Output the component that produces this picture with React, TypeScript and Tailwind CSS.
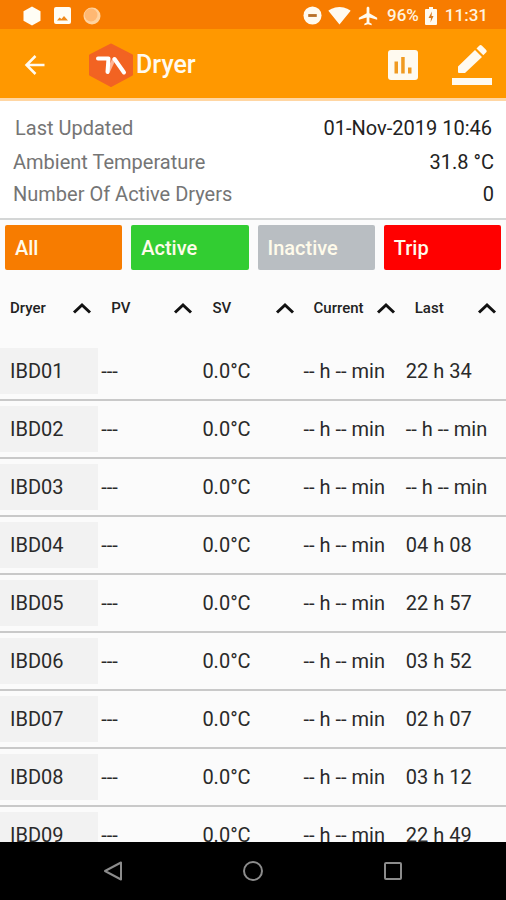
import { MdAirplanemodeActive, MdSignalWifi4Bar } from "react-icons/md";

const filters = [
  { name: "All", color: "bg-[#f77c00]" },
  { name: "Active", color: "bg-[#32cd32]" },
  { name: "Inactive", color: "bg-[#b9bec2]" },
  { name: "Trip", color: "bg-[#ff0000]" },
];

const columns = ["Dryer", "PV", "SV", "Current", "Last"];

const dryers = [
  { id: "IBD01", last: "22 h 34" },
  { id: "IBD02", last: "-- h -- min" },
  { id: "IBD03", last: "-- h -- min" },
  { id: "IBD04", last: "04 h 08" },
  { id: "IBD05", last: "22 h 57" },
  { id: "IBD06", last: "03 h 52" },
  { id: "IBD07", last: "02 h 07" },
  { id: "IBD08", last: "03 h 12" },
  { id: "IBD09", last: "22 h 49" },
];

function StatusBar() {
  return (
    <div className="flex h-[29px] shrink-0 items-center justify-between bg-[#f77c00] pt-0.5 pr-[18px] pl-[22px] text-[17px] font-medium text-[#fff3df]">
      <div className="flex items-center gap-3">
        <svg className="size-5" viewBox="0 0 20 20" fill="#fffdf5">
          <path d="M10 .5l8.500 4.800v9.400L10 19.500l-8.500-4.800V5.300z" />
        </svg>
        <svg className="size-[17px]" viewBox="0 0 17 17">
          <rect width="17" height="17" rx="2" fill="#fffdf5" />
          <path d="M3 13.500l2.500-3 2 1.500 2.500-3 4 4.500z" fill="#f08a1c" />
        </svg>
        <svg className="size-[18px]" viewBox="0 0 18 18">
          <circle cx="9" cy="9" r="8.500" fill="#ffd3a0" />
          <circle cx="8" cy="8" r="6.500" fill="#ffb873" />
        </svg>
      </div>
      <div className="flex items-center">
        <svg className="mr-1.5 size-[19px]" viewBox="0 0 20 20">
          <circle cx="10" cy="10" r="9.500" fill="#fffaf0" />
          <path d="M5.500 8.500h9v3h-9z" fill="#b8702a" />
        </svg>
        <MdSignalWifi4Bar className="mr-1.5 size-[23px] text-[#fffaf0]" />
        <MdAirplanemodeActive className="mr-2 size-[22px] text-[#fffaf0]" />
        <span>96%</span>
        <svg className="mr-2 ml-1.5 h-[18px] w-3" viewBox="0 0 12 18">
          <path d="M4 0h4v2h3a1 1 0 011 1v14a1 1 0 01-1 1H1a1 1 0 01-1-1V3a1 1 0 011-1h3z" fill="#fffaf0" />
          <path d="M7 4.500L3.500 11H6l-.5 4.500L8.500 9H6.500z" fill="#d9781a" />
        </svg>
        <span>11:31</span>
      </div>
    </div>
  );
}

function Logo() {
  return (
    <svg className="h-[46px] w-[46px]" viewBox="0 0 46 46" fill="none">
      <path
        d="M23 3l20.500 10.500v19L23 43.500 2.500 32.500v-19z"
        fill="#f26322"
        stroke="#f26322"
        strokeWidth="3"
        strokeLinejoin="round"
      />
      <path d="M20 30l6-13" stroke="#ffb596" strokeWidth="3.500" />
      <path
        d="M10 16.500h10.500L19.500 30"
        stroke="#fff"
        strokeWidth="4"
        strokeLinecap="round"
        strokeLinejoin="round"
      />
      <path d="M26.500 17l9.500 13.500" stroke="#fff" strokeWidth="4" strokeLinecap="round" />
    </svg>
  );
}

function Header() {
  return (
    <header className="flex h-[72px] shrink-0 items-center border-b-3 border-[#ffd6a3] bg-[#ff9800] pt-0.5 pr-3.5 pl-[22px] text-[#fffaf0]">
      <button type="button" aria-label="Back">
        <svg className="size-[26px]" viewBox="0 0 26 26" fill="none" stroke="currentColor" strokeWidth="2.500">
          <path d="M22.500 13H5M13.500 4L4.500 13l9 9" />
        </svg>
      </button>
      <div className="ml-10 flex items-center gap-0.5">
        <Logo />
        <h1 className="text-[25px] font-medium">Dryer</h1>
      </div>
      <button type="button" aria-label="Report" className="ml-auto">
        <svg className="size-[30px]" viewBox="0 0 30 30">
          <rect width="30" height="30" rx="3" fill="#fffaf0" />
          <path d="M6.500 11.500h3.500v12H6.500zM13.200 7h3.500v16.500h-3.500zM20 17.500h3.500v6H20z" fill="#f09a22" />
        </svg>
      </button>
      <button type="button" aria-label="Edit" className="ml-[34px]">
        <svg className="size-10" viewBox="0 0 40 40" fill="currentColor">
          <path d="M6 21.500L23 5l7 7-17 16H7a1 1 0 01-1-1zM24.500 3.500l2.700-2.700a2 2 0 012.800 0l4 4a2 2 0 010 2.800l-2.700 2.700zM0 33h40v7H0z" />
        </svg>
      </button>
    </header>
  );
}

function Summary() {
  return (
    <dl className="shrink-0 border-b-2 border-[#d4d6d6] bg-white pt-[11px] pr-3 pb-2 pl-[13px] text-xl leading-8 text-[#222]">
      <div className="flex justify-between px-0.5 pb-0.5">
        <dt className="text-[#757575]">Last Updated</dt>
        <dd>01-Nov-2019 10:46</dd>
      </div>
      <div className="flex justify-between">
        <dt className="text-[#757575]">Ambient Temperature</dt>
        <dd>31.8 °C</dd>
      </div>
      <div className="flex justify-between">
        <dt className="text-[#757575]">Number Of Active Dryers</dt>
        <dd>0</dd>
      </div>
    </dl>
  );
}

function SortIcon() {
  return (
    <svg className="h-3 w-5 shrink-0" viewBox="0 0 20 12" fill="none" stroke="#111" strokeWidth="3">
      <path d="M2 10.500L10 3l8 7.500" />
    </svg>
  );
}

function DryerTable() {
  return (
    <table className="w-full table-fixed text-xl text-[#2a2a2a]">
      <thead>
        <tr>
          {columns.map((name) => (
            <th key={name} className="h-[72px] p-0 pt-1 text-left text-[15px] font-medium">
              <button type="button" className="flex w-full items-center justify-between pr-[9px] pl-2.5 text-[#222]">
                {name}
                <SortIcon />
              </button>
            </th>
          ))}
        </tr>
      </thead>
      <tbody>
        {dryers.map((dryer) => (
          <tr key={dryer.id} className="h-[58px] border-b-2 border-[#c9c9c9]">
            <td className="p-0">
              <div className="mr-[3px] flex h-[46px] items-center bg-[#f2f2f2] pl-2.5">{dryer.id}</div>
            </td>
            <td className="p-0">---</td>
            <td className="p-0">0.0°C</td>
            <td className="p-0 whitespace-nowrap">-- h -- min</td>
            <td className="p-0 pl-px whitespace-nowrap">{dryer.last}</td>
          </tr>
        ))}
      </tbody>
    </table>
  );
}

function NavigationBar() {
  return (
    <nav className="flex h-[58px] shrink-0 items-center justify-around bg-black px-[43px] text-[#8c8c8c]">
      <button type="button" aria-label="Back">
        <svg className="size-6" viewBox="0 0 24 24" fill="none" stroke="currentColor" strokeWidth="2">
          <path d="M20 3.500v17L4 12z" strokeLinejoin="round" />
        </svg>
      </button>
      <button type="button" aria-label="Home">
        <svg className="size-6" viewBox="0 0 24 24" fill="none" stroke="currentColor" strokeWidth="2">
          <circle cx="12" cy="12" r="9" />
        </svg>
      </button>
      <button type="button" aria-label="Recent apps">
        <svg className="size-6" viewBox="0 0 24 24" fill="none" stroke="currentColor" strokeWidth="2">
          <rect x="4" y="4" width="16" height="16" rx="1" />
        </svg>
      </button>
    </nav>
  );
}

export default function App() {
  return (
    <div className="flex h-screen flex-col overflow-hidden bg-[#fbfbfb] font-[Roboto,sans-serif]">
      <StatusBar />
      <Header />
      <main className="flex min-h-0 flex-1 flex-col">
        <Summary />
        <div className="grid shrink-0 grid-cols-4 gap-[9px] px-[5px] pt-[5px]">
          {filters.map((filter) => (
            <button
              key={filter.name}
              type="button"
              className={`h-[45px] rounded-xs pl-2.5 text-left text-xl font-medium text-[#fffbea] ${filter.color}`}
            >
              {filter.name}
            </button>
          ))}
        </div>
        <div className="min-h-0 flex-1 overflow-hidden">
          <DryerTable />
        </div>
      </main>
      <NavigationBar />
    </div>
  );
}
